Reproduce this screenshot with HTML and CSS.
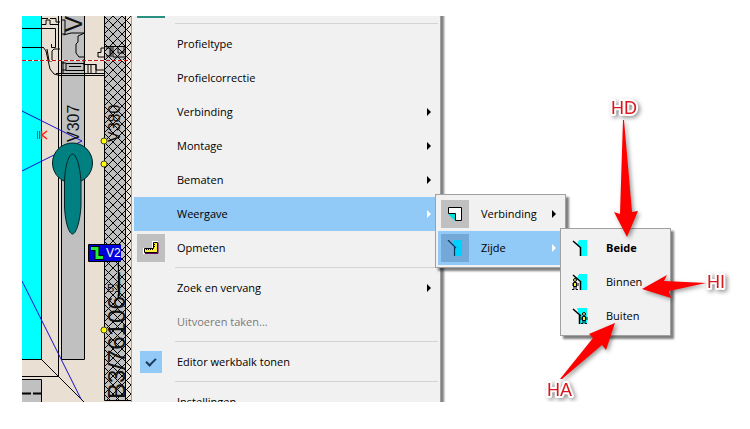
FILE: index.html
```html
<!DOCTYPE html>
<html lang="nl">
<head>
  <meta charset="UTF-8" />
  <meta name="viewport" content="width=device-width, initial-scale=1.0"/>
  <title>Weergave zijde</title>
  <link rel="stylesheet" href="styles.css">
</head>
<body>
  <main class="screen">
    <div class="editor">

      <!-- Drawing -->
      <svg class="drawing" viewBox="22 16 109 386">
        <defs>
          <pattern id="hatch" x="104" y="16" width="9" height="9" patternUnits="userSpaceOnUse">
            <path d="M0 0L9 9M9 0L0 9" stroke="#000" shape-rendering="crispEdges"/>
          </pattern>
        </defs>
        <rect x="22" y="16" width="109" height="386" fill="#e9dfd2"/>
        <rect x="22" y="16" width="19" height="343" fill="#0ff"/>
        <rect x="61" y="16" width="23" height="343" fill="#c0c0c0"/>
        <rect x="104" y="16" width="22" height="384" fill="#c0c0c0"/>
        <rect x="104" y="16" width="27" height="384" fill="url(#hatch)"/>
        <rect x="22" y="379" width="19" height="23" fill="#c0c0c0"/>

        <g class="line">
          <path d="M41.500 16V359.500H22M22 28.500H55.500V47.500H51.500V44M22 47.500H43"/>
          <path d="M58.500 16V376.500H22M61.500 16V359.500H84.500V16M41 359L84 402"/>
          <path d="M104.500 16V400.500H131M125.500 16V400M104 46.500H126M22 379.500H41.500V402"/>
          <path d="M43 47L46 51L50 69L54 74L60 75.500H104M56 73.500H104M47 49L49 61H52V51L54 49H60M58 73.500H63V61"/>
          <path d="M42 24.500H46V20H50V24.500H58M42 18.500H48M50 18.500H56V22H60M62 20H65V34H61"/>
          <path d="M63.500 35L71 33L84 33M84.500 33L78 36V42L76 44V53L79 57H84.500M84 59V64.500H96V73M88 65V73M91 65V73"/>
          <path d="M66 63.500H84V70.500H66ZM69 66.500H81M61 63H66M61 70H66"/>
          <path d="M98 52.500H101V48H104M98 52V57H104M96 64V70H104M106 48H110V56H106M111 46V57M113 46V57H125M118 47V53H124V47"/>
        </g>
        <path d="M22 393.500H41" stroke="#000" stroke-width="2" stroke-dasharray="9 2"/>
        <path d="M22 60.500H131" stroke="#fff"/>
        <path d="M22 60.500H131" stroke="#c11" stroke-dasharray="4 2"/>
        <g fill="none" stroke="#1a10c8">
          <path d="M22 111L82 141L22 171"/>
          <path d="M22 281L29 295L81 399"/>
        </g>

        <g class="handle">
          <circle cx="72.500" cy="163" r="20"/>
          <path d="M64.500 182C65 165 69 154 72.500 154S80 165 81 182V206C80 222 76 234 72.500 234S65 222 64.500 206Z"/>
        </g>

        <text class="code" transform="translate(79 142) rotate(-90)">V307</text>
        <text class="code" transform="translate(120 142) rotate(-90)">V380</text>
        <text class="code big" transform="translate(82 32) rotate(-90)">V</text>
        <text class="code big" transform="translate(125 399) rotate(-90)">B3/76106—</text>
        <text class="code small" x="107" y="292">B1</text>
        <path d="M118.500 262V298" stroke="#000"/>
        <path d="M117.500 264V298" stroke="#c63" stroke-dasharray="3 3"/>
        <path d="M37.500 131V139M39.500 131V139" stroke="#a0401a"/>
        <path d="M47 131L42 135L47 139M41.500 131V139" fill="none" stroke="#f21" stroke-width="1.500"/>

        <rect x="88" y="244" width="33" height="18" rx="1" fill="#000"/>
        <rect x="89" y="245" width="32" height="16" fill="#00d"/>
        <path d="M91 248.500H97V257.500H103" fill="none" stroke="#000" stroke-width="5"/>
        <path d="M91 248.500H97V257.500H103" fill="none" stroke="#2e3" stroke-width="3"/>
        <text class="tag" x="106" y="257">V2</text>

        <g fill="#ff0" stroke="#443">
          <circle cx="104" cy="141" r="3"/>
          <circle cx="104" cy="164" r="3"/>
          <circle cx="104" cy="330" r="3"/>
        </g>
      </svg>

      <!-- Context menu -->
      <ul class="menu">
        <li><button class="item" aria-label="Profiel"><span class="icon teal"></span></button></li>
        <li class="separator"></li>
        <li><button class="item"><span class="text">Profieltype</span></button></li>
        <li><button class="item"><span class="text">Profielcorrectie</span></button></li>
        <li><button class="item"><span class="text">Verbinding</span><span class="arrow"></span></button></li>
        <li><button class="item"><span class="text">Montage</span><span class="arrow"></span></button></li>
        <li><button class="item"><span class="text">Bematen</span><span class="arrow"></span></button></li>
        <li>
          <button class="item active"><span class="text">Weergave</span><span class="arrow"></span></button>
          <ul class="menu submenu">
            <li>
              <button class="item">
                <span class="icon boxed">
                  <svg width="16" height="16" viewBox="0 0 16 16">
                    <path d="M1.500 1.500H14.500V14.500H8.500V7.500H1.500Z" fill="#fff" stroke="#000"/>
                    <path d="M1 8H8V15Z" fill="#0dd"/>
                  </svg>
                </span>
                <span class="text">Verbinding</span><span class="arrow"></span>
              </button>
            </li>
            <li>
              <button class="item active">
                <span class="icon boxed">
                  <svg width="16" height="16" viewBox="0 0 16 16">
                    <path d="M7 0H15V16H8V7L5 4Z" fill="#00d0ff"/>
                    <path d="M1 0L9 8M7.500 7V16" fill="none" stroke="#08375a" stroke-width="1.200"/>
                  </svg>
                </span>
                <span class="text">Zijde</span><span class="arrow"></span>
              </button>
              <ul class="menu submenu sides">
                <li>
                  <button class="item">
                    <span class="icon">
                      <svg width="16" height="16" viewBox="0 0 16 16">
                        <path d="M7 0H15V16H8V7L5 4Z" fill="#0ff"/>
                        <path d="M1 1L9 8M8.500 7V16" fill="none" stroke="#000" stroke-width="1.500"/>
                      </svg>
                    </span>
                    <span class="text"><b>Beide</b></span>
                  </button>
                </li>
                <li>
                  <button class="item">
                    <span class="icon">
                      <svg width="16" height="16" viewBox="0 0 16 16">
                        <path d="M7 0H15V16H8V7L5 4Z" fill="#0ff"/>
                        <path d="M1 1L9 8M8.500 7V16" fill="none" stroke="#000" stroke-width="1.500"/>
                        <circle cx="3" cy="6" r="1.500" fill="#ee8" stroke="#000"/>
                        <path d="M1.500 8.500H4.500V12.500H1.500Z" fill="#ee3" stroke="#000"/>
                        <path d="M0 9V12M6 9V12M2 12V15.500H0M4 12V15.500H6" fill="none" stroke="#000"/>
                      </svg>
                    </span>
                    <span class="text">Binnen</span>
                  </button>
                </li>
                <li>
                  <button class="item">
                    <span class="icon">
                      <svg width="16" height="16" viewBox="0 0 16 16">
                        <path d="M5 0H15V16H7V7Z" fill="#0ff"/>
                        <path d="M1 1L9 8M7.500 7V16" fill="none" stroke="#000" stroke-width="1.500"/>
                        <circle cx="12" cy="6" r="1.500" fill="#ee8" stroke="#000"/>
                        <path d="M10.500 8.500H13.500V12.500H10.500Z" fill="#ee3" stroke="#000"/>
                        <path d="M9 9V12M15 9V12M11 12V15.500H9M13 12V15.500H15" fill="none" stroke="#000"/>
                      </svg>
                    </span>
                    <span class="text">Buiten</span>
                  </button>
                </li>
              </ul>
            </li>
          </ul>
        </li>
        <li>
          <button class="item">
            <span class="icon boxed">
              <svg width="16" height="16" viewBox="0 0 16 16">
                <path d="M0 8H9V1H15V14H0Z" fill="#fff"/>
                <path d="M1.500 8.500H10.500V2.500H14.500V12.500H1.500Z" fill="#fe3" stroke="#000"/>
                <path d="M3.500 9V10M5.500 9V10M7.500 9V10M9.500 9V10M11 6.500H12M11 4.500H12" stroke="#000"/>
                <path d="M15 3V13.500H2" fill="none" stroke="#606"/>
              </svg>
            </span>
            <span class="text">Opmeten</span>
          </button>
        </li>
        <li class="separator"></li>
        <li><button class="item"><span class="text">Zoek en vervang</span><span class="arrow"></span></button></li>
        <li><button class="item" disabled><span class="text">Uitvoeren taken...</span></button></li>
        <li class="separator"></li>
        <li>
          <label class="item">
            <input type="checkbox" checked>
            <span class="text">Editor werkbalk tonen</span>
          </label>
        </li>
        <li class="separator"></li>
        <li><button class="item"><span class="text">Instellingen</span></button></li>
      </ul>
    </div>

    <!-- Notes over the menus -->
    <svg class="notes" width="728" height="413" viewBox="22 16 728 413">
      <g class="pointer">
        <path d="M623 120H624L632 212L638 211L627 237L614 212L620 214Z"/>
        <path d="M706 283L664 281L667 275L642 289L671 298L669 291Z"/>
        <path d="M560 379L593 338L589 334L615 323L606 350L602 345L562 379Z"/>
      </g>
      <text x="611" y="114">HD</text>
      <text x="707" y="288">HI</text>
      <text x="547" y="396">HA</text>
    </svg>
  </main>
</body>
</html>
```
FILE: styles.css
```css
body {
  margin: 0;
  background-color: #fff;
  color: #000;
  font-family: "Open Sans", "Noto Sans", sans-serif;
  font-size: 11px;
}

.screen {
  position: relative;
  margin: 16px 0 0 22px;
}

/* cuts the menu off at top and bottom, submenus may run out to the right */
.editor {
  display: flex;
  align-items: flex-start;
  clip-path: inset(0 -400px 0 0);
  height: 386px;
}

.drawing {
  flex: none;
  width: 109px;
}

.line {
  fill: none;
  stroke: #000;
}

.handle {
  fill: #008080;
  stroke: #022;
}

.code {
  font-family: "Liberation Sans", sans-serif;
  font-size: 16px;
  fill: #111;
}

.code.big {
  font-size: 24px;
}

.code.small {
  font-size: 11px;
}

.tag {
  font-family: "Liberation Sans", sans-serif;
  font-size: 12px;
  fill: #fff;
}

/* Menus */
.menu {
  box-sizing: border-box;
  flex: none;
  width: 310px;
  margin: -32px 0 0;
  padding: 2px;
  list-style: none;
  background-color: #f1f1f1;
  border: 1px solid #a0a0a0;
  box-shadow: 3px 3px 2px rgba(0, 0, 0, 0.5);
}

.menu li {
  position: relative;
}

.submenu {
  position: absolute;
  top: -3px;
  left: calc(100% - 3px);
  z-index: 1;
  width: 131px;
  margin: 0;
}

.sides {
  width: 111px;
}

.item {
  display: grid;
  grid-template-columns: 28px 1fr auto;
  column-gap: 12px;
  align-items: center;
  box-sizing: border-box;
  width: 100%;
  height: 34px;
  padding: 0 7px 0 3px;
  border: none;
  background: none;
  color: inherit;
  font: inherit;
  text-align: left;
}

.item:disabled {
  color: #7a7a7a;
}

.item.active {
  background-color: #91c9f7;
}

.text {
  grid-column: 2;
  padding-bottom: 2px;
  white-space: nowrap;
}

.icon {
  display: flex;
  align-items: center;
  justify-content: center;
  height: 28px;
}

.icon.boxed {
  background-color: #c0c0c0;
}

.active .icon.boxed {
  background-color: #74a8d8;
}

.icon.teal {
  background-color: #2a9080;
}

.arrow {
  border: 4px solid transparent;
  border-left-color: #000;
  border-right: none;
}

.active .arrow {
  border-left-color: #fff;
}

.separator {
  height: 1px;
  margin: 2px 0 3px 41px;
  background-color: #d4d4d4;
}

.item input {
  display: flex;
  justify-content: center;
  appearance: none;
  width: 22px;
  height: 22px;
  margin: 0 3px;
  background-color: #91c9f7;
}

.item input:checked::before {
  content: "";
  width: 8px;
  height: 4px;
  margin-top: 7px;
  border: solid #1d3b57;
  border-width: 0 0 2px 2px;
  transform: rotate(-45deg);
}

/* Notes */
.notes {
  position: absolute;
  top: 0;
  left: 0;
  z-index: 2;
  max-width: 100%;
  pointer-events: none;
  filter: drop-shadow(2px 2px 2px rgba(0, 0, 0, 0.4));
}

.notes text {
  font-family: "Liberation Sans", sans-serif;
  font-size: 18px;
  fill: #d8181c;
  stroke: #fff;
  stroke-width: 4px;
  stroke-linejoin: round;
  paint-order: stroke;
}

.pointer {
  fill: #f00;
}
```
